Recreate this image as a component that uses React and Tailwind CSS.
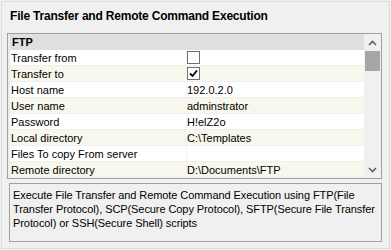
import React from "react";

const rows = [
  { name: "Transfer from", value: { type: "check", checked: false } },
  { name: "Transfer to", value: { type: "check", checked: true } },
  { name: "Host name", value: "192.0.2.0" },
  { name: "User name", value: "adminstrator" },
  { name: "Password", value: "H!elZ2o" },
  { name: "Local directory", value: "C:\\Templates" },
  { name: "Files To copy From server", value: "" },
  { name: "Remote directory", value: "D:\\Documents\\FTP" },
];

function Check({ checked }) {
  return (
    <div className="w-[13px] h-[13px] border border-[#707070] bg-white flex items-center justify-center">
      {checked && (
        <svg width="9" height="9" viewBox="0 0 9 9">
          <path d="M1 4.5 L3.5 7 L8 1.5" stroke="#000" strokeWidth="1.8" fill="none" />
        </svg>
      )}
    </div>
  );
}

export default function App() {
  return (
    <div
      className="w-[391px] h-[250px] bg-[#f0f0f0] p-px text-black"
      style={{ fontFamily: '"Liberation Sans", Arial, sans-serif' }}
    >
      <div className="w-[389px] h-[248px] border border-[#dcdcdc] flex flex-col">
        <div className="h-[31px] pl-[8px] pt-[6px] text-[12px] leading-[16px] font-bold tracking-[-0.2px]">
          File Transfer and Remote Command Execution
        </div>
        <div className="ml-[5px] w-[375px] h-[146px] border border-[#a0a0a0] bg-white flex">
          <div className="flex-1 flex flex-col text-[11px] leading-[16px]">
            <div className="h-[16px] flex bg-[#e8e8e8]">
              <div className="w-[2px] bg-[#ececec]" />
              <div className="flex-1 bg-[#dfdfdf] font-bold pl-[2px]">FTP</div>
            </div>
            {rows.map((r, i) => (
              <div key={i} className="h-[16px] flex">
                <div className="w-[2px] bg-[#ececec]" />
                <div
                  className={
                    "flex-1 flex border-b border-[#efefef] " +
                    (i % 2 === 1 ? "bg-[#f7f7ec]" : "bg-white")
                  }
                >
                  <div className="w-[177px] pl-[1px] whitespace-nowrap overflow-hidden border-r border-[#f4f4f4]">
                    {r.name}
                  </div>
                  <div className="flex-1 flex items-center whitespace-nowrap">
                    {typeof r.value === "object" ? (
                      <Check checked={r.value.checked} />
                    ) : (
                      <span className="leading-[16px]">{r.value}</span>
                    )}
                  </div>
                </div>
              </div>
            ))}
          </div>
          <div className="w-[17px] bg-[#f0f0f0] flex flex-col items-center">
            <div className="h-[17px] w-full flex items-center justify-center">
              <svg width="9" height="6" viewBox="0 0 9 6">
                <path d="M1 5 L4.5 1.5 L8 5" stroke="#606060" strokeWidth="1.6" fill="none" />
              </svg>
            </div>
            <div className="w-[15px] h-[20px] bg-[#a6a6a6]" />
            <div className="flex-1" />
            <div className="h-[17px] w-full flex items-center justify-center">
              <svg width="9" height="6" viewBox="0 0 9 6">
                <path d="M1 1 L4.5 4.5 L8 1" stroke="#606060" strokeWidth="1.6" fill="none" />
              </svg>
            </div>
          </div>
        </div>
        <div className="mt-[4px] ml-[7px] w-[373px] h-[59px] border border-[#a0a0a0] pl-[3px] pr-0 pt-[4px] text-[11px] leading-[14px] tracking-[-0.08px]">
          Execute File Transfer and Remote Command Execution using FTP(File Transfer Protocol), SCP(Secure Copy Protocol), SFTP(Secure File Transfer Protocol) or SSH(Secure Shell) scripts
        </div>
      </div>
    </div>
  );
}
